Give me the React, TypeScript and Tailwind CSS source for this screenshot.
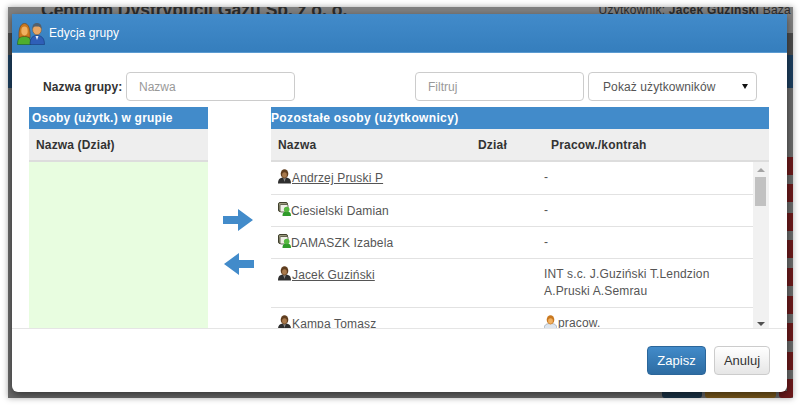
const sans = "font-['Liberation_Sans',Arial,sans-serif]";

function PersonIcon() {
  return (
    <svg width="13" height="15" viewBox="0 0 13 15" className="shrink-0 mr-[1px]">
      <path d="M0 14.5 C0 10 2 8.5 6.5 8.5 C11 8.5 13 10 13 14.5 Z" fill="#2e2e2e" />
      <path d="M5.2 9 L6.5 13 L7.8 9 Z" fill="#8b8b8b" />
      <ellipse cx="6.5" cy="4.8" rx="3.8" ry="4.6" fill="#5f3d1e" />
      <ellipse cx="6.5" cy="6" rx="2.4" ry="2.8" fill="#a8794c" />
    </svg>
  );
}

function StaffIcon() {
  return (
    <svg width="13" height="15" viewBox="0 0 13 15" className="shrink-0 mr-[1px]">
      <path d="M0 14.5 C0 10 2 8.5 6.5 8.5 C11 8.5 13 10 13 14.5 Z" fill="#dfe6ee" stroke="#8592a0" strokeWidth="0.6" />
      <ellipse cx="6.5" cy="4.8" rx="3.8" ry="4.6" fill="#c9781f" />
      <ellipse cx="6.5" cy="6" rx="2.4" ry="2.8" fill="#f0b060" />
    </svg>
  );
}

function ContactIcon() {
  return (
    <svg width="13" height="14" viewBox="0 0 13 14" className="shrink-0">
      <rect x="0.5" y="0.5" width="9" height="9" rx="1.5" fill="#9b9b7e" stroke="#3f3f2c" />
      <rect x="2" y="2.5" width="8" height="7.5" rx="1" fill="#efefe6" stroke="#4a4a36" strokeWidth="0.8" />
      <path d="M4.5 14 C4.5 10.5 6 9.5 8.7 9.5 C11.5 9.5 13 10.5 13 14 Z" fill="#2f9a2a" />
      <circle cx="8.7" cy="7.5" r="2.8" fill="#55b83f" />
    </svg>
  );
}

function GroupIcon() {
  return (
    <svg width="28" height="23" viewBox="0 0 28 23" className="shrink-0">
      <path d="M0.5 22.5 C0.5 16 3 14 7 14 C11 14 14 16 14 22.5 Z" fill="#4fae2e" stroke="#1f5f14" strokeWidth="0.6" />
      <path d="M2 16 C1.5 8 3 1.5 7.5 1.5 C12 1.5 13.5 8 13 16 C11 14 4 14 2 16 Z" fill="#c9781f" stroke="#6f3f10" strokeWidth="0.6" />
      <ellipse cx="7.5" cy="9" rx="3.2" ry="4.4" fill="#f0b060" />
      <path d="M13 22.5 C13 16 15.5 13.5 20 13.5 C24.5 13.5 27.5 16 27.5 22.5 Z" fill="#2f5fb8" stroke="#173a7a" strokeWidth="0.6" />
      <path d="M18.5 14 L20 18 L21.5 14 Z" fill="#e8eef8" />
      <ellipse cx="20" cy="7.5" rx="4.4" ry="5.2" fill="#e8a766" stroke="#7a5028" strokeWidth="0.5" />
      <path d="M15.5 7 C15 2.5 17.5 1 20 1 C23 1 25 3 24.5 7 C23.5 4.5 21 4.5 19 4.5 C17.5 4.5 16 5 15.5 7 Z" fill="#54606c" />
    </svg>
  );
}

function Arrow({ left = false }: { left?: boolean }) {
  return (
    <svg width="30" height="22" viewBox="0 0 30 22" className={left ? "rotate-180 ml-[3px]" : ""}>
      <path d="M0 7 H15 V0 L30 11 L15 22 V15 H0 Z" fill="#428bca" />
    </svg>
  );
}

const rows = [
  { name: "Andrzej Pruski P", link: true, icon: <PersonIcon />, h: "h-[33px]", work: "-" },
  { name: "Ciesielski Damian", link: false, icon: <ContactIcon />, h: "h-[32px]", work: "-" },
  { name: "DAMASZK Izabela", link: false, icon: <ContactIcon />, h: "h-[32px]", work: "-" },
  { name: "Jacek Guziński", link: true, icon: <PersonIcon />, h: "h-[49px]", work: "INT s.c. J.Guziński T.Lendzion A.Pruski A.Semrau" },
  { name: "Kampa Tomasz", link: false, icon: <PersonIcon />, h: "h-[33px]", work: "pracow." },
];

const redTabs = ["top-[150px]", "top-[177px]", "top-[206px]", "top-[233px]", "top-[261px]", "top-[289px]", "top-[316px]", "top-[345px]", "top-[372px]"];

export default function App() {
  return (
    <div className={`${sans} w-[800px] h-[406px] bg-white overflow-hidden pt-[7px] pl-[8px]`}>
      {/* dimmed page behind the dialog */}
      <div className="relative w-[785px] h-[391px] bg-[#6a6a6a] shadow-[0_0_6px_rgba(0,0,0,0.35)] overflow-hidden">
        <div className="h-[26px] bg-[#808080] flex items-start justify-between pl-[33px] pr-[2px] text-[#2b2b2b] leading-none">
          <span className="text-[17.5px] font-bold -mt-[5px]">Centrum Dystrybucji Gazu Sp. z o. o.</span>
          <span className="text-[12px] -mt-[3px] tracking-[0.25px]">Użytkownik: <b>Jacek Guziński</b> Baza</span>
        </div>
        <div className="absolute left-0 top-[26px] w-[4px] h-[22px] bg-[#4c4c4c]" />
        <div className="absolute left-0 top-[48px] w-[4px] h-[33px] bg-[#1d3f5f]" />
        <div className="absolute right-0 top-[26px] w-[6px] h-[22px] bg-[#4c4c4c]" />
        <div className="absolute right-0 top-[48px] w-[6px] h-[33px] bg-[#1d3f5f]" />
        {redTabs.map((top) => (
          <div key={top} className={`absolute right-0 ${top} w-[6px] h-[18px] bg-[#6d1a1c]`} />
        ))}
        <div className="absolute left-[654px] bottom-0 w-[40px] h-[7px] bg-[#1c3549] rounded-b-[3px]" />
        <div className="absolute left-[697px] bottom-0 w-[71px] h-[7px] bg-[#7c5a1c] rounded-b-[3px]" />
        <div className="absolute left-[771px] bottom-0 w-[14px] h-[7px] bg-[#6d1a1c] rounded-b-[3px]" />

        {/* dialog */}
        <div className="absolute left-[4px] top-[7px] w-[775px] h-[378px] bg-white rounded-b-[6px] flex flex-col overflow-hidden shadow-[0_3px_9px_rgba(0,0,0,0.5)]">
          <div className="h-[39px] shrink-0 flex items-center gap-[4px] pl-[5px] bg-gradient-to-b from-[#428bca] to-[#357ebd] border-b border-[#5b9bd1] text-white text-[12px]">
            <GroupIcon />
            <span className="tracking-[0.05px]">Edycja grupy</span>
          </div>

          <div className="h-[275px] shrink-0 overflow-hidden">
            <div className="flex items-center h-[54px] pt-[19px] pb-[6px]">
              <label className="ml-[31px] w-[83px] text-[12px] font-bold text-[#333] tracking-[0.12px] whitespace-nowrap">Nazwa grupy:</label>
              <input placeholder="Nazwa" className="w-[169px] h-[29px] px-[12px] text-[12px] border border-[#ccc] rounded-[4px] placeholder:text-[#999]" />
              <input placeholder="Filtruj" className="ml-[120px] w-[169px] h-[29px] px-[12px] text-[12px] border border-[#ccc] rounded-[4px] placeholder:text-[#999]" />
              <div className="ml-[4px] w-[169px] h-[29px] pl-[14px] pr-[8px] flex items-center justify-between text-[12px] text-[#555] tracking-[0.1px] border border-[#ccc] rounded-[4px]">
                <span>Pokaż użytkowników</span>
                <span className="w-0 h-0 border-x-[3px] border-x-transparent border-t-[5px] border-t-[#111]" />
              </div>
            </div>

            <div className="flex ml-[17px]">
              <div className="w-[179px] shrink-0">
                <div className="h-[22px] bg-[#428bca] text-white text-[12px] font-bold tracking-[0.23px] pl-[3px] flex items-center">Osoby (użytk.) w grupie</div>
                <div className="h-[33px] bg-[#eeeeee] border-b-2 border-[#dddddd] text-[12px] font-bold text-[#333] tracking-[0.15px] pl-[7px] flex items-center">Nazwa (Dział)</div>
                <div className="h-[170px] bg-[#e8fde0]" />
              </div>

              <div className="w-[63px] shrink-0 flex flex-col items-center pt-[102px] gap-[22px] pr-[4px]">
                <Arrow />
                <Arrow left />
              </div>

              <div className="w-[498px] shrink-0">
                <div className="h-[22px] bg-[#428bca] text-white text-[12px] font-bold tracking-[0.35px] flex items-center">Pozostałe osoby (użytkownicy)</div>
                <div className="h-[33px] bg-[#eeeeee] border-b-2 border-[#dddddd] text-[12px] font-bold text-[#333] tracking-[0.18px] flex items-center">
                  <span className="w-[207px] pl-[7px]">Nazwa</span>
                  <span className="w-[73px]">Dział</span>
                  <span>Pracow./kontrah</span>
                </div>
                <div className="flex h-[170px] overflow-hidden">
                  <div className="w-[482px] text-[12px] text-[#555] tracking-[0.15px]">
                    {rows.map((row) => (
                      <div key={row.name} className={`${row.h} flex border-b border-[#e2e2e2] pt-[7px]`}>
                        <div className="w-[273px] pl-[7px] flex items-start">
                          {row.icon}
                          <span className={row.link ? "underline" : ""}>{row.name}</span>
                        </div>
                        <div className="flex-1 pr-[24px] leading-[17px] flex items-start">
                          {row.work === "pracow." && <StaffIcon />}
                          <span>{row.work}</span>
                        </div>
                      </div>
                    ))}
                  </div>
                  <div className="w-[16px] bg-[#f1f1f1] flex flex-col items-center justify-between py-[6px] relative">
                    <span className="w-0 h-0 border-x-[4px] border-x-transparent border-b-[4px] border-b-[#a3a3a3]" />
                    <div className="absolute left-[2px] top-[15px] w-[11px] h-[29px] bg-[#c1c1c1]" />
                    <span className="w-0 h-0 border-x-[4px] border-x-transparent border-t-[4px] border-t-[#505050]" />
                  </div>
                </div>
              </div>
            </div>
          </div>

          <div className="flex-1 border-t border-[#e5e5e5] flex items-start justify-end gap-[8px] pt-[17px] pr-[17px] text-[13px]">
            <button className="w-[59px] h-[29px] rounded-[4px] bg-gradient-to-b from-[#428bca] to-[#2d6ca2] border border-[#2b669a] text-white">Zapisz</button>
            <button className="w-[56px] h-[29px] rounded-[4px] bg-gradient-to-b from-white to-[#e6e6e6] border border-[#ccc] text-[#333]">Anuluj</button>
          </div>
        </div>
      </div>
    </div>
  );
}
